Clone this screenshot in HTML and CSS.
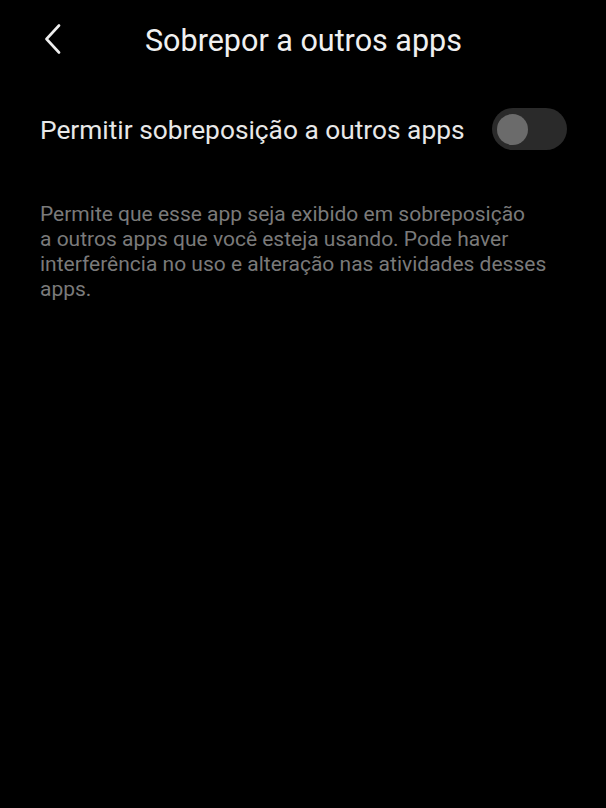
FILE: index.html
```html
<!DOCTYPE html>
<html lang="pt">
<head>
<meta charset="utf-8">
<link rel="stylesheet" href="styles.css">
</head>
<body>
<div class="screen">
  <header class="topbar">
    <button class="back" aria-label="Voltar">
      <svg width="18" height="30" viewBox="0 0 18 30"><path d="M15 1.5 L2.5 15 L15 28.5" fill="none" stroke="#eeeeee" stroke-width="2.6" stroke-linecap="round" stroke-linejoin="round"/></svg>
    </button>
    <h1 class="title">Sobrepor a outros apps</h1>
  </header>
  <div class="setting">
    <span class="setting-label">Permitir sobreposição a outros apps</span>
    <span class="switch"><span class="knob"></span></span>
  </div>
  <p class="desc">Permite que esse app seja exibido em sobreposição<br>a outros apps que você esteja usando. Pode haver<br>interferência no uso e alteração nas atividades desses<br>apps.</p>
</div>
</body>
</html>
```

FILE: styles.css
```css
html, body {
  margin: 0;
  padding: 0;
  background: #000;
}
body {
  width: 606px;
  height: 808px;
  font-family: Roboto, "Noto Sans", sans-serif;
  color: #ececec;
  overflow: hidden;
}
.screen {
  display: flex;
  flex-direction: column;
}
.topbar {
  display: flex;
  align-items: center;
  height: 80px;
  padding-left: 44px;
}
.back {
  background: none;
  border: 0;
  padding: 0;
  width: 18px;
  height: 30px;
  margin-top: -3px;
  display: flex;
}
.title {
  margin: 0 0 0 83px;
  font-size: 30.5px;
  font-weight: 400;
  color: #f0f0f0;
  margin-top: 0;
}
.setting {
  display: flex;
  align-items: center;
  justify-content: space-between;
  padding: 27px 39px 0 40px;
  height: 44px;
}
.setting-label {
  font-size: 26.3px;
  color: #e8e8e8;
  margin-top: 2px;
}
.switch {
  width: 75px;
  height: 42px;
  border-radius: 21px;
  background: #2a2a2a;
  display: flex;
  align-items: center;
  padding-left: 5px;
  box-sizing: border-box;
}
.knob {
  width: 31px;
  height: 31px;
  border-radius: 50%;
  background: #6b6b6b;
}
.desc {
  margin: 51px 0 0 40px;
  font-size: 21px;
  line-height: 25px;
  color: #7a7a7a;
}
```
